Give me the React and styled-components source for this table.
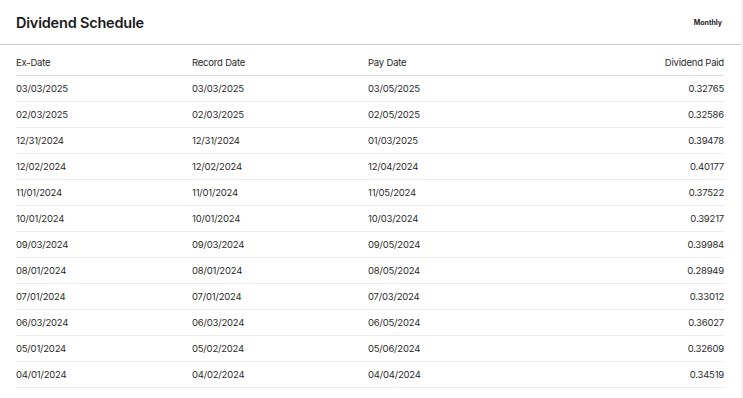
import React from "react";
import styled, { createGlobalStyle } from "styled-components";

const rows = [
	["03/03/2025", "03/03/2025", "03/05/2025", "0.32765"],
	["02/03/2025", "02/03/2025", "02/05/2025", "0.32586"],
	["12/31/2024", "12/31/2024", "01/03/2025", "0.39478"],
	["12/02/2024", "12/02/2024", "12/04/2024", "0.40177"],
	["11/01/2024", "11/01/2024", "11/05/2024", "0.37522"],
	["10/01/2024", "10/01/2024", "10/03/2024", "0.39217"],
	["09/03/2024", "09/03/2024", "09/05/2024", "0.39984"],
	["08/01/2024", "08/01/2024", "08/05/2024", "0.28949"],
	["07/01/2024", "07/01/2024", "07/03/2024", "0.33012"],
	["06/03/2024", "06/03/2024", "06/05/2024", "0.36027"],
	["05/01/2024", "05/02/2024", "05/06/2024", "0.32609"],
	["04/01/2024", "04/02/2024", "04/04/2024", "0.34519"],
];

const GlobalStyle = createGlobalStyle`
	body {
		margin: 0;
		background: #f2f2f2;
		font-family: Inter, "Liberation Sans", sans-serif;
		color: #1f1f1f;
	}
`;

const App = () => {
	return (
		<>
			<GlobalStyle />
			<Card>
				<Header>
					<Title>Dividend Schedule</Title>
					<Frequency>Monthly</Frequency>
				</Header>
				<Table>
					<HeadRow>
						<Cell>Ex-Date</Cell>
						<Cell>Record Date</Cell>
						<Cell>Pay Date</Cell>
						<Cell right>Dividend Paid</Cell>
					</HeadRow>
					{rows.map((r) => (
						<Row key={r[0]}>
							<Cell>{r[0]}</Cell>
							<Cell>{r[1]}</Cell>
							<Cell>{r[2]}</Cell>
							<Cell right>{r[3]}</Cell>
						</Row>
					))}
				</Table>
			</Card>
		</>
	);
};

export default App;

const columns = "176px 176px 176px 1fr";

const Card = styled.div`
	width: 741px;
	height: 398px;
	background: #fff;
`;

const Header = styled.div`
	height: 45px;
	display: flex;
	align-items: center;
	justify-content: space-between;
	padding: 0 19px 0 16px;
	border-bottom: 1px solid #c9c9c9;
	box-sizing: border-box;
`;

const Title = styled.h2`
	margin: 0;
	font-size: 14.5px;
	font-weight: 600;
	letter-spacing: -0.2px;
	color: #1a1a1a;
`;

const Frequency = styled.span`
	font-size: 7px;
	font-weight: 700;
	color: #222;
`;

const Table = styled.div`
	padding: 0 17px 0 16px;
	display: flex;
	flex-direction: column;
`;

const HeadRow = styled.div`
	display: grid;
	grid-template-columns: ${columns};
	height: 31px;
	padding-top: 4px;
	box-sizing: border-box;
	align-items: center;
	border-bottom: 1px solid #dcdcdc;
`;

const Row = styled.div`
	display: grid;
	grid-template-columns: ${columns};
	height: 26px;
	align-items: center;
	border-bottom: 1px solid #ececec;
	box-sizing: border-box;
`;

const Cell = styled.div`
	font-size: 9.5px;
	letter-spacing: -0.2px;
	color: #2a2a2a;
	text-align: ${(p) => (p.right ? "right" : "left")};
`;
